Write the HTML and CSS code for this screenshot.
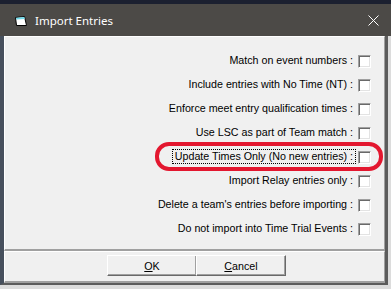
FILE: index.html
```html
<!DOCTYPE html>
<html>
<head>
<meta charset="utf-8">
<link rel="stylesheet" href="styles.css">
</head>
<body>
<div class="window">
  <div class="titlebar">
    <svg class="app-icon" width="12" height="10" viewBox="0 0 12 10">
      <path d="M0.5 1.5 L9.5 0.5 L11.5 9.5 L1.5 9.5 Z" fill="#fff" stroke="#000"/>
      <path d="M1 1.8 L9.3 0.9 L9.8 3 L1.3 3.5 Z" fill="#6fd8e8"/>
    </svg>
    <span class="title">Import Entries</span>
    <svg class="close" width="11" height="11" viewBox="0 0 11 11">
      <path d="M0.5 0.5 L10.5 10.5 M10.5 0.5 L0.5 10.5" stroke="#fff" stroke-width="1"/>
    </svg>
  </div>
  <div class="client">
    <div class="panel options">
      <div class="row"><span class="label">Match on event numbers :</span><span class="check"></span></div>
      <div class="row"><span class="label">Include entries with No Time (NT) :</span><span class="check"></span></div>
      <div class="row"><span class="label">Enforce meet entry qualification times :</span><span class="check"></span></div>
      <div class="row"><span class="label">Use LSC as part of Team match :</span><span class="check"></span></div>
      <div class="row"><span class="label focused">Update Times Only (No new entries) :</span><span class="check"></span></div>
      <div class="row"><span class="label">Import Relay entries only :</span><span class="check"></span></div>
      <div class="row"><span class="label">Delete a team's entries before importing :</span><span class="check"></span></div>
      <div class="row"><span class="label">Do not import into Time Trial Events :</span><span class="check"></span></div>
      <div class="highlight"></div>
    </div>
    <div class="panel actions">
      <button class="btn"><u>O</u>K</button>
      <button class="btn"><u>C</u>ancel</button>
    </div>
  </div>
</div>
</body>
</html>
```
FILE: styles.css
```css
html, body {
  margin: 0;
  padding: 0;
}
body {
  width: 391px;
  height: 289px;
  overflow: hidden;
  background: #1b2030;
  font-family: "Liberation Sans", Arial, sans-serif;
  font-size: 10.7px;
  color: #000;
}
.window {
  margin-top: 4px;
  height: 285px;
  background: #dcdcdc;
  display: flex;
  flex-direction: column;
}
.titlebar {
  height: 32px;
  background: #4c4a47;
  display: flex;
  align-items: center;
  box-sizing: border-box;
  padding-left: 15px;
}
.app-icon {
  display: block;
  margin-top: 1px;
}
.title {
  font-family: "Noto Sans", "Open Sans", sans-serif;
  font-size: 11.5px;
  color: #fff;
  margin-left: 8px;
  flex: 1;
}
.close {
  display: block;
  margin-right: 12px;
  margin-top: 1px;
}
.client {
  width: 381px;
  border-left: 4px solid #47505d;
  border-right: 3px solid #5c5c5c;
  border-bottom: 2px solid #5c5c5c;
  background: #f0f0f0;
}
.panel {
  box-sizing: border-box;
  border-top: 1px solid #fff;
  border-left: 1px solid #fff;
  border-right: 1px solid #a0a0a0;
  border-bottom: 2px solid #a0a0a0;
}
.options {
  position: relative;
  height: 215px;
  padding: 12px 13px 0 0;
  display: flex;
  flex-direction: column;
}
.row {
  height: 24px;
  display: flex;
  justify-content: flex-end;
  align-items: flex-start;
}
.label {
  margin-top: 5px;
  line-height: 13px;
  padding: 0 2px;
  margin-right: 3px;
  white-space: pre;
}
.focused {
  outline: 1px dotted #000;
  outline-offset: 0;
}
.check {
  margin-top: 6px;
  width: 13px;
  height: 13px;
  box-sizing: border-box;
  background: #fff;
  border-top: 1px solid #a0a0a0;
  border-left: 1px solid #a0a0a0;
  border-right: 1px solid #fff;
  border-bottom: 1px solid #fff;
  box-shadow: inset 1px 1px 0 #696969, inset -1px -1px 0 #e3e3e3;
}
.highlight {
  position: absolute;
  left: 150px;
  top: 105px;
  width: 228px;
  height: 29px;
  box-sizing: border-box;
  border: 4px solid #e3172f;
  border-radius: 14px;
}
.actions {
  height: 32px;
  border-bottom: 2px solid #a0a0a0;
  display: flex;
  justify-content: center;
  padding-top: 3px;
  padding-left: 4px;
}
.btn {
  width: 90px;
  height: 21px;
  margin: 0;
  padding: 0;
  font: inherit;
  color: #000;
  background: #f0f0f0;
  border-top: 1px solid #fff;
  border-left: 1px solid #fff;
  border-right: 1px solid #696969;
  border-bottom: 1px solid #696969;
  box-shadow: inset -1px -1px 0 #a0a0a0;
}
.btn + .btn {
  margin-left: -1px;
}
.btn u {
  text-decoration: underline;
}
```
